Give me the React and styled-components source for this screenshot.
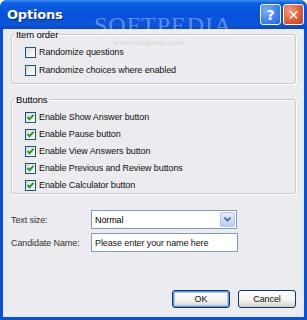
import React from "react"
import styled, { createGlobalStyle } from "styled-components"

const Global = createGlobalStyle`
  html, body { margin: 0; padding: 0; background: #fff; }
  body { font-family: Tahoma, "Liberation Sans", "DejaVu Sans", sans-serif; font-size: 9px; letter-spacing: -0.1px; color: #000; }
`

const Window = styled.div`
  width: 307px;
  height: 320px;
  display: flex;
  flex-direction: column;
  background: #0a4fd6;
  border-radius: 7px 7px 0 0;
  overflow: hidden;
  position: relative;
`

const TitleBar = styled.div`
  height: 29px;
  flex: none;
  display: flex;
  align-items: center;
  padding: 0 3px 0 7px;
  background: linear-gradient(#3d8cf2 0%, #0a5fe0 12%, #0652dc 50%, #0a55dc 85%, #0847c0 100%);
`

const Title = styled.div`
  flex: 1;
  color: #fff;
  font-weight: bold;
  font-size: 13px;
  font-family: "DejaVu Sans", sans-serif;
  letter-spacing: -0.2px;
  text-shadow: 1px 1px 0 #0a2a80;
`

const CapButton = styled.div`
  width: 21px;
  height: 21px;
  margin-left: 2px;
  border: 1px solid #fff;
  border-radius: 3px;
  box-sizing: border-box;
  display: flex;
  align-items: center;
  justify-content: center;
  color: #fff;
  font-weight: bold;
  font-size: 14px;
  letter-spacing: 0;
  font-family: "DejaVu Sans", sans-serif;
  background: ${p => p.$close
    ? "radial-gradient(circle at 30% 30%, #f29b7d, #e0582e 60%, #c3401a)"
    : "radial-gradient(circle at 30% 30%, #7fb0fa, #3b7ef0 60%, #2a62d6)"};
`

const Body = styled.div`
  flex: 1;
  margin: 0 3px 3px;
  background: #ecebef;
  padding: 0 8px 9px;
  display: flex;
  flex-direction: column;
`

const Group = styled.fieldset`
  margin: 0 0 ${p => p.$gap}px;
  padding: ${p => p.$top}px 0 6px 13px;
  border: 1px solid #cacaca;
  border-radius: 3px;
  box-shadow: inset 1px 1px 0 #fff, 1px 1px 0 #fff;
  display: flex;
  flex-direction: column;
  gap: ${p => p.$rowGap}px;
  height: ${p => p.$h}px;
  box-sizing: border-box;
`

const Legend = styled.legend`
  padding: 0 1px;
  margin-left: -10px;
  font-size: 9.5px;
  color: #000;
`

const Row = styled.label`
  display: flex;
  align-items: center;
  gap: 3px;
  height: 12px;
  color: #111;
`

const Box = styled.span`
  width: 11px;
  height: 11px;
  box-sizing: border-box;
  border: 1px solid #1c5180;
  background: linear-gradient(135deg, #dcdcd6, #fff);
  display: flex;
  align-items: center;
  justify-content: center;
`

const Check = () => (
  <svg width="9" height="9" viewBox="0 0 9 9">
    <path d="M1.5 4 L3.5 6.2 L7.5 1.8" fill="none" stroke="#21a121" strokeWidth="2" />
  </svg>
)

const CheckRow = ({ checked, children }) => (
  <Row>
    <Box>{checked && <Check />}</Box>
    <span>{children}</span>
  </Row>
)

const FieldRow = styled.div`
  display: flex;
  align-items: center;
  height: 19px;
  margin-bottom: ${p => p.$gap || 0}px;
`

const FieldLabel = styled.div`
  width: 80px;
  color: #333;
`

const Select = styled.div`
  width: 146px;
  height: 19px;
  box-sizing: border-box;
  border: 1px solid #7f9db9;
  background: #fff;
  display: flex;
  align-items: center;
  padding-left: 3px;
`

const SelText = styled.div`
  flex: 1;
`

const Arrow = styled.div`
  width: 15px;
  height: 15px;
  margin-right: 1px;
  border: 1px solid #b4c8f6;
  border-radius: 2px;
  box-sizing: border-box;
  background: linear-gradient(#e4ecfd, #b9cdf7);
  display: flex;
  align-items: center;
  justify-content: center;
`

const Input = styled.div`
  width: 147px;
  height: 19px;
  box-sizing: border-box;
  border: 1px solid #7f9db9;
  background: #fff;
  display: flex;
  align-items: center;
  padding-left: 3px;
  color: #111;
`

const Footer = styled.div`
  margin-top: auto;
  display: flex;
  justify-content: flex-end;
  gap: 8px;
`

const Button = styled.div`
  width: 58px;
  height: 18px;
  box-sizing: border-box;
  border: 1px solid #003c74;
  border-radius: 3px;
  background: linear-gradient(#fff, #f2f2ee 60%, #d6d0c5);
  box-shadow: ${p => p.$default ? "inset 0 0 0 1px #6d8fdd, inset 0 0 0 2px #b0c8f6" : "inset 0 -1px 0 #d8d2c6"};
  display: flex;
  align-items: center;
  justify-content: center;
  color: #111;
`

const Watermark = styled.div`
  position: absolute;
  left: 94px;
  top: 12px;
  font-family: "Liberation Serif", serif;
  font-size: 24px;
  letter-spacing: 1px;
  color: rgba(255, 255, 255, 0.35);
  pointer-events: none;
`

const WatermarkUrl = styled.div`
  position: absolute;
  left: 113px;
  top: 37px;
  font-family: "Liberation Serif", serif;
  font-size: 9px;
  color: rgba(200, 200, 205, 0.6);
  pointer-events: none;
`

export default function App() {
  return (
    <Window>
      <Global />
      <TitleBar>
        <Title>Options</Title>
        <CapButton>?</CapButton>
        <CapButton $close>✕</CapButton>
      </TitleBar>
      <Body>
        <Group $h={55} $gap={10} $top={6} $rowGap={6}>
          <Legend>Item order</Legend>
          <CheckRow>Randomize questions</CheckRow>
          <CheckRow>Randomize choices where enabled</CheckRow>
        </Group>
        <Group $h={100} $gap={16} $top={6} $rowGap={5}>
          <Legend>Buttons</Legend>
          <CheckRow checked>Enable Show Answer button</CheckRow>
          <CheckRow checked>Enable Pause button</CheckRow>
          <CheckRow checked>Enable View Answers button</CheckRow>
          <CheckRow checked>Enable Previous and Review buttons</CheckRow>
          <CheckRow checked>Enable Calculator button</CheckRow>
        </Group>
        <FieldRow $gap={4}>
          <FieldLabel>Text size:</FieldLabel>
          <Select>
            <SelText>Normal</SelText>
            <Arrow>
              <svg width="7" height="5" viewBox="0 0 7 5">
                <path d="M0.5 0.5 L3.5 3.5 L6.5 0.5" fill="none" stroke="#4d6185" strokeWidth="1.6" />
              </svg>
            </Arrow>
          </Select>
        </FieldRow>
        <FieldRow>
          <FieldLabel>Candidate Name:</FieldLabel>
          <Input>Please enter your name here</Input>
        </FieldRow>
        <Footer>
          <Button $default>OK</Button>
          <Button>Cancel</Button>
        </Footer>
      </Body>
      <Watermark>SOFTPEDIA</Watermark>
      <WatermarkUrl>www.softpedia.com</WatermarkUrl>
    </Window>
  )
}
